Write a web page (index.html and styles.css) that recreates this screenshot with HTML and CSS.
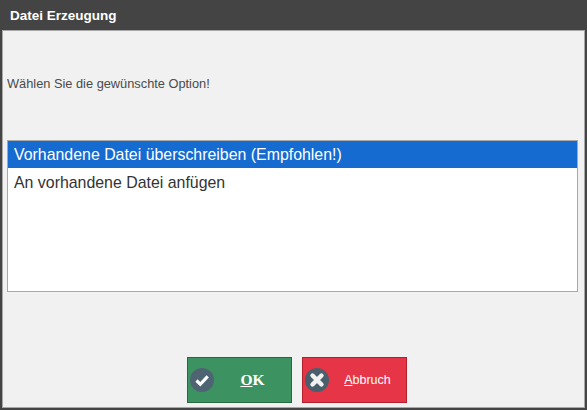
FILE: index.html
```html
<!DOCTYPE html>
<html lang="de">
<head>
    <meta charset="UTF-8">
    <title>Datei Erzeugung</title>
    <link rel="stylesheet" href="styles.css">
</head>
<body>
    <div class="dialog">
        <div class="titlebar">Datei Erzeugung</div>
        <div class="content">
            <p class="prompt">Wählen Sie die gewünschte Option!</p>
            <ul class="options">
                <li class="option selected">Vorhandene Datei überschreiben (Empfohlen!)</li>
                <li class="option">An vorhandene Datei anfügen</li>
            </ul>
            <div class="buttons">
                <button class="btn btn-ok">
                    <svg class="btn-icon" viewBox="0 0 24 24">
                        <circle cx="12" cy="12" r="12" fill="#4f6472"/>
                        <path d="M6.5 12.5l3.8 3.8 7.4-8" fill="none" stroke="#fff" stroke-width="3.2"/>
                    </svg>
                    <span class="btn-label"><u>O</u>K</span>
                </button>
                <button class="btn btn-cancel">
                    <svg class="btn-icon" viewBox="0 0 24 24">
                        <circle cx="12" cy="12" r="12" fill="#4a5f6c"/>
                        <path d="M7.5 7.5l9 9M16.5 7.5l-9 9" fill="none" stroke="#f2f2f2" stroke-width="4.4" stroke-linecap="round"/>
                    </svg>
                    <span class="btn-label"><u>A</u>bbruch</span>
                </button>
            </div>
        </div>
    </div>
</body>
</html>
```

FILE: styles.css
```css
html, body {
    margin: 0;
    padding: 0;
    height: 100%;
}

body {
    font-family: "Liberation Sans", Arial, sans-serif;
    background-color: #444444;
}

.dialog {
    display: flex;
    flex-direction: column;
    height: 410px;
    padding: 0 2px 2px 2px;
    box-sizing: border-box;
}

.titlebar {
    height: 30px;
    line-height: 31px;
    padding-left: 8px;
    color: #fff;
    font-size: 13.5px;
    font-weight: bold;
    flex-shrink: 0;
}

.content {
    flex: 1;
    display: flex;
    flex-direction: column;
    background-color: #f1f1f1;
    border: 1px solid #a8a8a8;
    padding: 0 6px 0 4px;
}

.prompt {
    margin: 44px 0 0;
    height: 18px;
    line-height: 18px;
    font-size: 12.8px;
    color: #4a4a4a;
}

.options {
    list-style: none;
    margin: 47px 0 0;
    padding: 0;
    height: 150px;
    background-color: #fff;
    border: 1px solid #a8a8a8;
}

.option {
    height: 29px;
    line-height: 29px;
    padding-left: 6px;
    font-size: 15.9px;
    color: #333;
}

.option.selected {
    height: 27px;
    line-height: 27px;
    background-color: #166bd0;
    color: #fff;
}

.buttons {
    display: flex;
    gap: 10px;
    margin: 65px 0 0 180px;
}

.btn {
    display: flex;
    align-items: center;
    width: 105px;
    height: 46px;
    padding: 0 0 0 2px;
    border: 1px solid;
    color: #fff;
    cursor: pointer;
}

.btn-ok {
    background-color: #3c9260;
    border-color: #27693f;
    font-family: "Liberation Serif", serif;
    font-weight: bold;
    font-size: 15.5px;
}

.btn-cancel {
    background-color: #e53546;
    border-color: #b5202e;
    font-family: "Liberation Sans", Arial, sans-serif;
    font-size: 12.5px;
}

.btn-icon {
    width: 24px;
    height: 24px;
    flex-shrink: 0;
}

.btn-label {
    flex: 1;
    text-align: center;
}
```
